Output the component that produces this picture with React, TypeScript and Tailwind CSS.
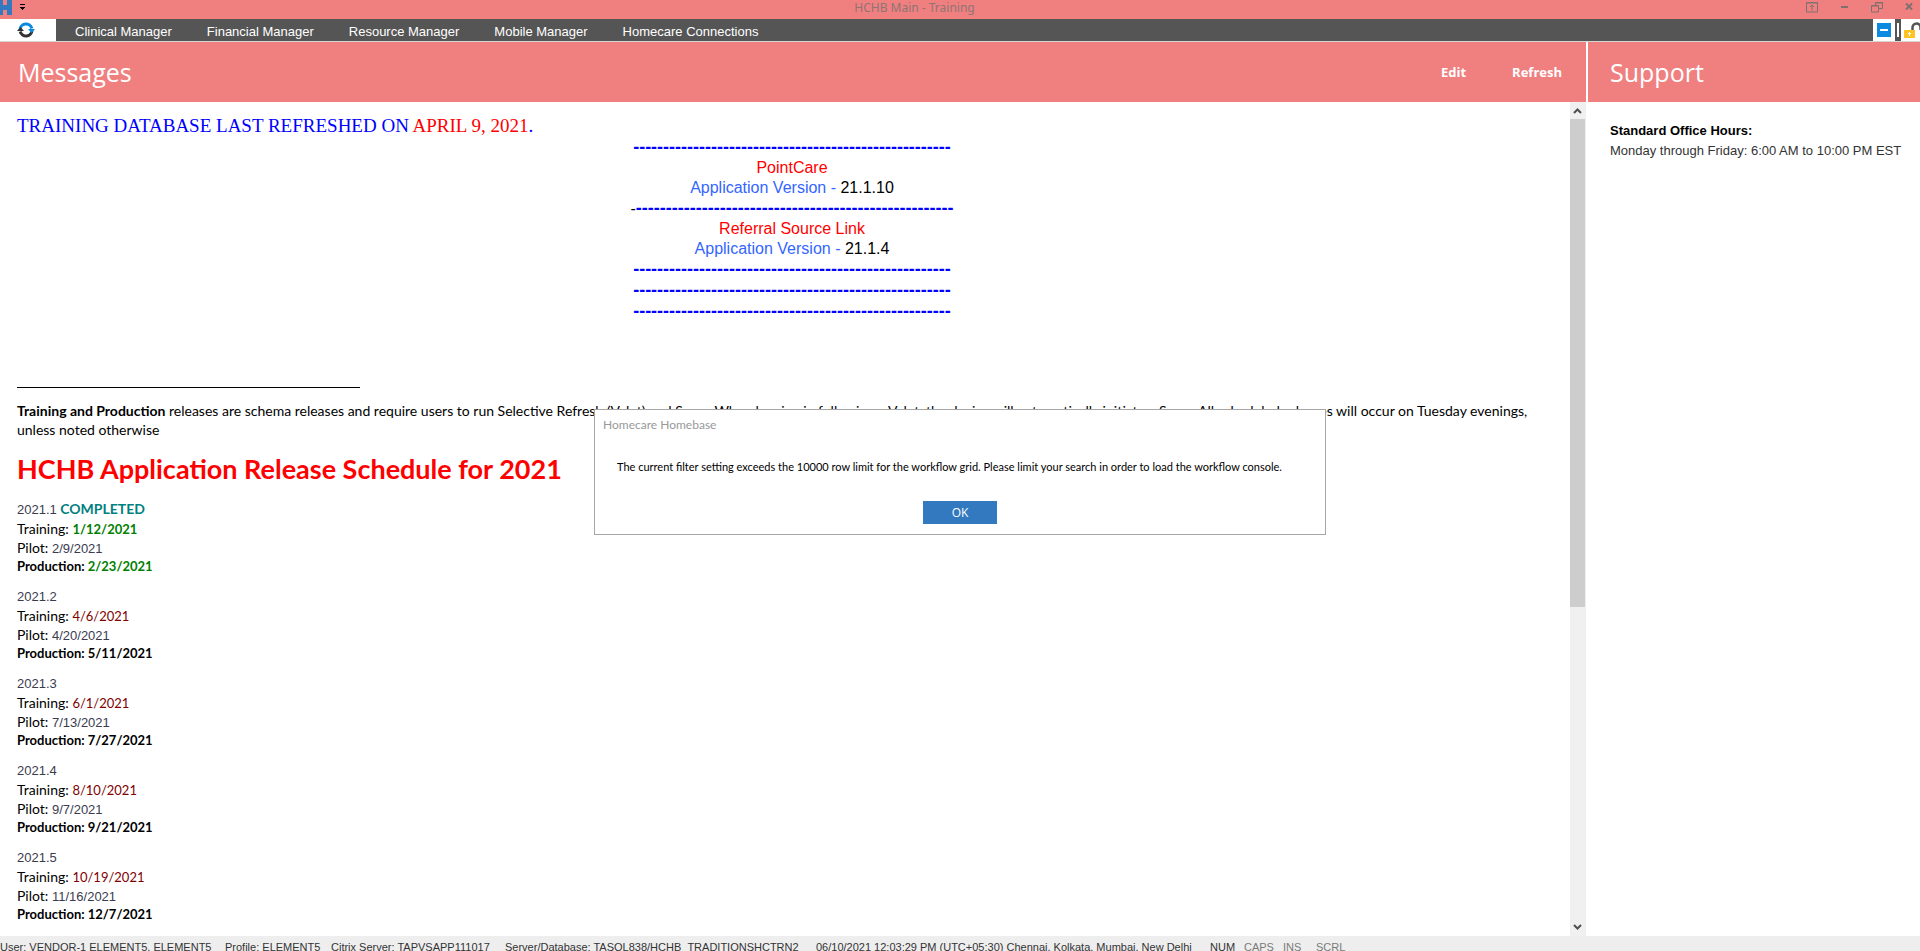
import React from "react";

const navItems: { label: string }[] = [
  { label: "Clinical Manager" },
  { label: "Financial Manager" },
  { label: "Resource Manager" },
  { label: "Mobile Manager" },
  { label: "Homecare Connections" },
];

type Release = {
  name: string;
  training: string;
  pilot: string;
  production: string;
  completed?: boolean;
};

const releases: Release[] = [
  { name: "2021.1", training: "1/12/2021", pilot: "2/9/2021", production: "2/23/2021", completed: true },
  { name: "2021.2", training: "4/6/2021", pilot: "4/20/2021", production: "5/11/2021" },
  { name: "2021.3", training: "6/1/2021", pilot: "7/13/2021", production: "7/27/2021" },
  { name: "2021.4", training: "8/10/2021", pilot: "9/7/2021", production: "9/21/2021" },
  { name: "2021.5", training: "10/19/2021", pilot: "11/16/2021", production: "12/7/2021" },
];

const dashes = "-".repeat(53);

function TitleBar() {
  return (
    <header className="flex h-[19px] shrink-0 items-start justify-between bg-[#f08080]">
      <div className="flex flex-1 items-start">
        <svg className="h-[15px] w-3" viewBox="0 0 12 15" fill="#3279bf" aria-hidden="true">
          <path d="M0 0h3v5h4V0h5v15H7v-5H3v5H0z" />
        </svg>
        <button aria-label="Customize toolbar" className="ml-2 flex h-4 items-start">
          <svg className="h-4 w-[5px]" viewBox="0 0 5 16" fill="#000" shapeRendering="crispEdges">
            <path d="M0 4h5v1H0zM0 7h5v1H0zM1 8h3v1H1zM2 9h1v1H2z" />
          </svg>
        </button>
      </div>
      <h1 className="pr-[84px] font-['Noto_Sans','Open_Sans',sans-serif] text-[12px] leading-4 text-[#8f7474]">
        HCHB Main - Training
      </h1>
      <div className="flex flex-1 justify-end gap-[22px] pr-[7px] pt-0.5">
        <button aria-label="Ribbon display options">
          <svg className="h-[11px] w-3" viewBox="0 0 12 11" fill="none" stroke="#80706f">
            <path d="M.5 .5h11v9.500H.5z" />
            <path d="M6 8.500V3M4 5l2-2 2 2M.5 1h11" />
          </svg>
        </button>
        <button aria-label="Minimize" className="ml-px">
          <svg className="h-[11px] w-2" viewBox="0 0 8 11" fill="#80706f">
            <path d="M0 4h7v2H0z" />
          </svg>
        </button>
        <button aria-label="Restore">
          <svg className="h-[11px] w-3" viewBox="0 0 12 11" fill="none" stroke="#80706f">
            <path d="M4.500 3V.5h7v6H8M4.500 1h7M.5 3.500h7v6.500h-7zM.5 4h7" />
          </svg>
        </button>
        <button aria-label="Close">
          <svg className="h-[11px] w-2" viewBox="0 0 8 11" fill="none" stroke="#80706f" strokeWidth="2">
            <path d="M1 1.500l6 6M7 1.500l-6 6" />
          </svg>
        </button>
      </div>
    </header>
  );
}

function NavBar() {
  return (
    <nav className="flex h-[23px] shrink-0 border-b border-[#d4d4d4] bg-[#555555]">
      <button aria-label="Reload" className="flex w-14 items-center bg-white pl-[17px]">
        <svg className="h-4 w-[18px]" viewBox="0 0 18 16" fill="none">
          <path d="M3 8a6 6 0 0 1 11.800-1.500" stroke="#0a8be0" strokeWidth="3" />
          <path d="M15 8a6 6 0 0 1-11.800 1.500" stroke="#333" strokeWidth="3" />
          <path d="M11 7h7l-3.500 4z" fill="#0a8be0" />
          <path d="M0 9h7L3.500 5z" fill="#333" />
        </svg>
      </button>
      <div className="flex flex-1 items-center gap-[35px] pl-[19px] pt-[3px] text-[13px] leading-5 text-white">
        {navItems.map((n) => (
          <a key={n.label} href="#" className="whitespace-nowrap">
            {n.label}
          </a>
        ))}
      </div>
      <button aria-label="Collapse panel" className="flex w-[22px] items-center justify-center bg-white">
        <svg className="size-3.5" viewBox="0 0 14 14">
          <path d="M0 0h14v14H0z" fill="#0a8be0" />
          <path d="M3 6h8v2H3z" fill="#fff" />
        </svg>
      </button>
      <span className="flex w-[6px] items-center justify-center">
        <span className="h-3.5 w-0.5 border border-white" />
      </span>
      <button aria-label="Unlock" className="flex w-[19px] items-center justify-end bg-white">
        <svg className="h-4 w-4" viewBox="0 0 16 16" fill="none">
          <path d="M8.500 8V5.500a4 4 0 0 1 8 0V8" stroke="#555" strokeWidth="2.500" />
          <path d="M0 8h11v8H0z" fill="#ffc423" />
          <path d="M5 10h1v4H5zM4 11h3v1H4z" fill="#fff" />
        </svg>
      </button>
    </nav>
  );
}

function VersionBlock() {
  return (
    <div className="text-center text-[16px] leading-5">
      <p className="text-[18px] font-bold leading-[21px] text-[#0000ff]">{dashes}</p>
      <p className="text-[#ff0000]">PointCare</p>
      <p className="text-[#3366ff]">
        Application Version - <span className="text-black">21.1.10</span>
      </p>
      <p className="text-[18px] font-bold leading-[21px] text-[#0000ff]">
        <span className="text-[16px] font-normal text-black">-</span>
        {dashes}
      </p>
      <p className="text-[#ff0000]">Referral Source Link</p>
      <p className="text-[#3366ff]">
        Application Version - <span className="text-black">21.1.4</span>
      </p>
      <div className="text-[18px] font-bold leading-[21px] text-[#0000ff]">
        <p>{dashes}</p>
        <p>{dashes}</p>
        <p>{dashes}</p>
      </div>
    </div>
  );
}

function ReleaseItem({ r }: { r: Release }) {
  return (
    <li className="text-[14px] leading-[19px]">
      <p className="font-['Liberation_Sans',Arial,sans-serif] text-[13px] leading-[19px] text-[#3b3b4f]">
        {r.name}
        {r.completed && (
          <b className="font-['Lato',sans-serif] text-[14px] font-bold leading-none text-[#008080]"> COMPLETED</b>
        )}
      </p>
      <p>
        Training:{" "}
        {r.completed ? (
          <b className="text-[13px] leading-none text-[#008000]">{r.training}</b>
        ) : (
          <span className="text-[13px] leading-none text-[#800000]">{r.training}</span>
        )}
      </p>
      <p>
        Pilot:{" "}
        <span className="font-['Liberation_Sans',Arial,sans-serif] text-[13px] leading-none text-[#3b3b4f]">
          {r.pilot}
        </span>
      </p>
      <p className="text-[13px] font-bold leading-[19px]">
        Production: <span className={r.completed ? "text-[#008000]" : "text-black"}>{r.production}</span>
      </p>
    </li>
  );
}

function ScrollBar() {
  return (
    <div className="flex w-4 shrink-0 flex-col bg-[#f0f0f0]" aria-hidden="true">
      <svg className="h-[17px] w-4" viewBox="0 0 16 17" fill="none" stroke="#505050" strokeWidth="2">
        <path d="M4 11l3.500-3.500L11 11" />
      </svg>
      <div className="flex flex-1 flex-col pr-px">
        <div className="basis-[61%] bg-[#cdcdcd]" />
      </div>
      <svg className="h-[17px] w-4" viewBox="0 0 16 17" fill="none" stroke="#505050" strokeWidth="2">
        <path d="M4 6l3.500 3.500L11 6" />
      </svg>
    </div>
  );
}

function MessagesPanel() {
  return (
    <main className="flex min-w-0 flex-1 flex-col">
      <div className="flex h-[60px] shrink-0 items-center justify-between bg-[#f08080] pl-[18px] pr-6 font-['Open_Sans','Noto_Sans',sans-serif] text-white">
        <h2 className="text-[25px] leading-8">Messages</h2>
        <div className="flex gap-[46px] text-[13px] font-bold leading-5">
          <button>Edit</button>
          <button>Refresh</button>
        </div>
      </div>
      <div className="flex min-h-0 flex-1">
        <article className="min-w-0 flex-1 overflow-hidden pl-[17px] pt-[13px]">
          <p className="font-['Liberation_Serif','Times_New_Roman',serif] text-[19px] leading-[22px] text-[#0000ff]">
            TRAINING DATABASE LAST REFRESHED ON <span className="text-[#ff0000]">APRIL 9, 2021</span>.
          </p>
          <div className="pr-[3px]">
            <VersionBlock />
          </div>
          <div className="mt-[65px] w-[343px] border-t border-black" />
          <div className="pr-4 pt-[13px] font-['Lato',sans-serif] text-black">
            <p className="text-[14px] leading-[19px]">
              <b>Training and Production</b> releases are schema releases and require users to run Selective
              Refresh (Valet) and Sync.&nbsp; When logging in following a Valet, the device will automatically
              initiate a Sync.&nbsp; All scheduled releases will occur on Tuesday evenings, unless noted otherwise
            </p>
            <h3 className="mt-3 text-[27px] font-bold leading-9 text-[#ff0000]">
              HCHB Application Release Schedule for 2021
            </h3>
            <ul className="mt-[13px] flex flex-col gap-[11px]">
              {releases.map((r) => (
                <ReleaseItem key={r.name} r={r} />
              ))}
            </ul>
          </div>
        </article>
        <ScrollBar />
      </div>
    </main>
  );
}

function SupportPanel() {
  return (
    <aside className="flex w-[332px] shrink-0 flex-col">
      <div className="flex h-[60px] shrink-0 items-center bg-[#f08080] pl-[22px]">
        <h2 className="font-['Open_Sans','Noto_Sans',sans-serif] text-[25px] leading-8 text-white">Support</h2>
      </div>
      <div className="pl-[22px] pt-[19px] text-[13px] leading-5">
        <p className="font-bold text-black">Standard Office Hours:</p>
        <p className="text-[#333333]">Monday through Friday: 6:00 AM to 10:00 PM EST</p>
      </div>
    </aside>
  );
}

function StatusBar() {
  return (
    <footer className="flex h-[15px] shrink-0 overflow-hidden whitespace-pre bg-[#eeeeee] text-[11px] leading-[22px] text-[#333333]">
      <span className="w-[225px]">User: VENDOR-1 ELEMENT5, ELEMENT5</span>
      <span className="w-[106px]">Profile: ELEMENT5</span>
      <span className="w-[174px]">Citrix Server: TAPVSAPP111017</span>
      <span className="w-[311px]">Server/Database: TASQL838/HCHB_TRADITIONSHCTRN2</span>
      <span className="w-[394px]">06/10/2021 12:03:29 PM (UTC+05:30) Chennai, Kolkata, Mumbai, New Delhi</span>
      <span className="w-[34px]">NUM</span>
      <span className="w-[39px] text-[#7a7a7a]">CAPS</span>
      <span className="w-[33px] text-[#7a7a7a]">INS</span>
      <span className="text-[#7a7a7a]">SCRL</span>
    </footer>
  );
}

function LimitDialog() {
  return (
    <div
      role="alertdialog"
      aria-labelledby="dialog-title"
      aria-describedby="dialog-text"
      className="absolute left-1/2 top-[409px] flex w-[732px] -translate-x-1/2 flex-col border border-[#a6a6a6] bg-white pb-[10px] font-['Lato',sans-serif]"
    >
      <h2 id="dialog-title" className="px-2 pt-1.5 text-[12px] leading-[18px] text-[#999999]">
        Homecare Homebase
      </h2>
      <p id="dialog-text" className="mt-6 px-[22px] text-[11px] leading-[18px] text-black">
        The current filter setting exceeds the 10000 row limit for the workflow grid. Please limit your search in
        order to load the workflow console.
      </p>
      <button className="mt-[25px] h-[23px] w-[74px] self-center bg-[#3279bf] font-['Open_Sans',sans-serif] text-[12px] leading-5 text-white">
        OK
      </button>
    </div>
  );
}

export default function App() {
  return (
    <div className="relative flex h-screen flex-col overflow-hidden bg-white font-['Liberation_Sans',Arial,sans-serif]">
      <TitleBar />
      <NavBar />
      <div className="flex min-h-0 flex-1 gap-0.5">
        <MessagesPanel />
        <SupportPanel />
      </div>
      <StatusBar />
      <LimitDialog />
    </div>
  );
}
